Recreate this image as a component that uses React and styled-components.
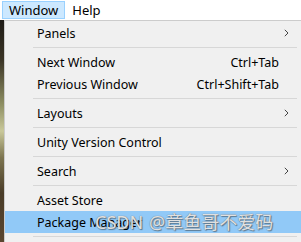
import React from "react";
import styled, { createGlobalStyle } from "styled-components";

const Global = createGlobalStyle`
  html, body {
    margin: 0;
    padding: 0;
    background: #ffffff;
    overflow: hidden;
  }
  body {
    font-family: "Noto Sans", "Noto Sans CJK SC", sans-serif;
    font-size: 12px;
    color: #000;
  }
`;

const Screen = styled.div`
  width: 301px;
  height: 242px;
  display: flex;
  flex-direction: column;
  position: relative;
  overflow: hidden;
`;

const MenuBar = styled.div`
  height: 20px;
  display: flex;
  align-items: stretch;
  padding: 1px 0 0 2px;
  box-sizing: border-box;
  background: #fff;
`;

const BarItem = styled.div`
  display: flex;
  align-items: center;
  padding: 0 6px 0 6px;
  height: 18px;
  box-sizing: border-box;
  border: 1px solid ${(p) => (p.$open ? "#99d1ff" : "transparent")};
  background: ${(p) => (p.$open ? "#cce8ff" : "transparent")};
  font-size: 13px;
`;

const Body = styled.div`
  flex: 1;
  display: flex;
`;

const Backdrop = styled.div`
  width: 4px;
  background: linear-gradient(
    to bottom,
    #1e1b16 0%,
    #3b3526 18%,
    #8e8f63 38%,
    #c9c89a 50%,
    #7d7550 62%,
    #4a3c28 78%,
    #5a4630 100%
  );
`;

const Popup = styled.div`
  flex: 1;
  background: #f0f0f0;
  border-top: 1px solid #cccccc;
  border-left: 1px solid #cccccc;
  padding-top: 1px;
  display: flex;
  flex-direction: column;
`;

const Item = styled.div`
  height: 22px;
  display: flex;
  align-items: center;
  padding: 0 12px 0 32px;
  background: ${(p) => (p.$hover ? "#91c9f7" : "transparent")};
  font-size: 12.5px;
  white-space: nowrap;
`;

const Label = styled.span`
  flex: 1;
`;

const Shortcut = styled.span`
  margin-right: 10px;
`;

const Chevron = styled.svg`
  width: 5px;
  height: 8px;
`;

const Separator = styled.div`
  height: 7px;
  display: flex;
  align-items: center;
  padding: 0 4px 0 28px;

  &::after {
    content: "";
    flex: 1;
    height: 1px;
    background: #d7d7d7;
  }
`;

const Watermark = styled.div`
  position: absolute;
  left: 95px;
  top: 211px;
  display: flex;
  gap: 6px;
  font-size: 18px;
  line-height: 22px;
  color: rgba(232, 232, 232, 0.95);
  text-shadow: 0 0 1px #666, 1px 1px 1px rgba(0, 0, 0, 0.4);
  white-space: nowrap;
  pointer-events: none;
`;

const Arrow = () => (
  <Chevron viewBox="0 0 5 8">
    <path d="M0.8 0.8 L4 4 L0.8 7.2" fill="none" stroke="#444" strokeWidth="1" />
  </Chevron>
);

function App() {
  return (
    <Screen>
      <Global />
      <MenuBar>
        <BarItem $open>Window</BarItem>
        <BarItem>Help</BarItem>
      </MenuBar>
      <Body>
        <Backdrop />
        <Popup>
          <Item>
            <Label>Panels</Label>
            <Arrow />
          </Item>
          <Separator />
          <Item>
            <Label>Next Window</Label>
            <Shortcut>Ctrl+Tab</Shortcut>
          </Item>
          <Item>
            <Label>Previous Window</Label>
            <Shortcut>Ctrl+Shift+Tab</Shortcut>
          </Item>
          <Separator />
          <Item>
            <Label>Layouts</Label>
            <Arrow />
          </Item>
          <Separator />
          <Item>
            <Label>Unity Version Control</Label>
          </Item>
          <Separator />
          <Item>
            <Label>Search</Label>
            <Arrow />
          </Item>
          <Separator />
          <Item>
            <Label>Asset Store</Label>
          </Item>
          <Item $hover>
            <Label>Package Manager</Label>
          </Item>
          <Separator />
        </Popup>
      </Body>
      <Watermark>
        <span>CSDN</span>
        <span>@章鱼哥不爱码</span>
      </Watermark>
    </Screen>
  );
}

export default App;
